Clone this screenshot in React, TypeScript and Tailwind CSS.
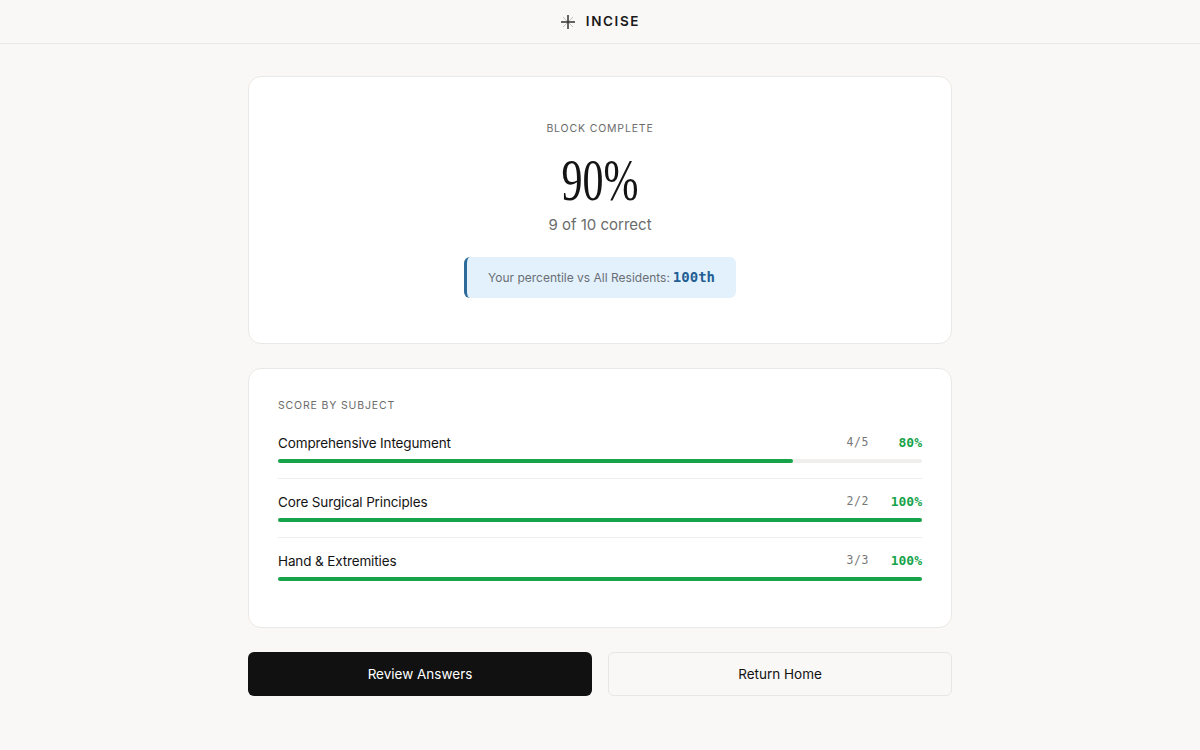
import React from "react"

const subjects = [
	{ name: "Comprehensive Integument", correct: 4, total: 5 },
	{ name: "Core Surgical Principles", correct: 2, total: 2 },
	{ name: "Hand & Extremities", correct: 3, total: 3 },
]

const sans = "font-['Inter','Noto_Sans',sans-serif]"
const mono = "font-['DejaVu_Sans_Mono','Liberation_Mono',monospace]"

function Logo() {
	return (
		<svg width="16" height="16" viewBox="0 0 16 16" fill="none">
			<path d="M3 3L13 13M13 3L3 13" stroke="#c4c4c4" strokeWidth="1" />
			<path d="M8 1V15M1 8H15" stroke="#333" strokeWidth="1.5" />
		</svg>
	)
}

export default function App() {
	return (
		<div className={`min-h-screen bg-[#f9f8f6] text-[#141414] ${sans}`}>
			<header className="h-11 border-b border-[#ebe9e6] flex items-center justify-center gap-[10px]">
				<Logo />
				<span className="text-[13.5px] font-semibold tracking-[0.12em] text-[#1a1a1a]">INCISE</span>
			</header>

			<main className="w-[704px] mx-auto pt-8 pb-12">
				<section className="bg-white border border-[#ebe9e6] rounded-[13px] pt-[44px] pb-[45px] flex flex-col items-center">
					<div className="text-[10.5px] leading-4 tracking-[0.08em] text-[#6b6b6b]">BLOCK COMPLETE</div>
					<div className="mt-[14px] h-[58px] flex items-center justify-center">
						<span className="inline-block scale-x-[0.7] text-[60px] leading-none text-[#141414] font-['Liberation_Serif','DejaVu_Serif',serif]">
							90%
						</span>
					</div>
					<div className="mt-[6px] text-[15px] leading-5 text-[#6b6b6b]">9 of 10 correct</div>
					<div className="mt-[22px] w-[272px] h-[41px] bg-[#e3f1fc] border-l-[3px] border-[#2f6b9a] rounded-[6px] flex items-center justify-center gap-[3px]">
						<span className="text-[12px] text-[#6a6f75]">Your percentile vs All Residents:</span>
						<span className={`text-[14px] font-bold text-[#1f5f94] ${mono}`}>100th</span>
					</div>
				</section>

				<section className="mt-6 bg-white border border-[#ebe9e6] rounded-[13px] px-[29px] pt-[29px] pb-[31px]">
					<div className="text-[10.5px] leading-4 tracking-[0.08em] text-[#6b6b6b] mb-[6px]">SCORE BY SUBJECT</div>
					{subjects.map((s, i) => {
						const pct = Math.round((s.correct / s.total) * 100)
						return (
							<div
								key={s.name}
								className={`pt-[13px] pb-[15px] ${i < subjects.length - 1 ? "border-b border-[#efeeec]" : ""}`}
							>
								<div className="flex items-center justify-between h-5">
									<span className="text-[13.5px] tracking-[-0.01em] text-[#141414]">{s.name}</span>
									<div className="flex items-center gap-[21px]">
										<span className={`text-[11.5px] text-[#777] tracking-[0.05em] ${mono}`}>
											{s.correct}/{s.total}
										</span>
										<span className={`min-w-[32px] text-right text-[13px] font-bold text-[#16a34a] ${mono}`}>
											{pct}%
										</span>
									</div>
								</div>
								<div className="mt-[6px] h-1 rounded-full bg-[#f0efed]">
									<div className="h-1 rounded-full bg-[#16a34a]" style={{ width: `${pct}%` }} />
								</div>
							</div>
						)
					})}
				</section>

				<div className="mt-6 grid grid-cols-2 gap-4">
					<button className="h-11 rounded-[6px] bg-[#111] text-white text-[13.5px]">Review Answers</button>
					<button className="h-11 rounded-[6px] bg-[#f9f8f6] border border-[#e8e6e3] text-[#111] text-[13.5px]">
						Return Home
					</button>
				</div>
			</main>
		</div>
	)
}
